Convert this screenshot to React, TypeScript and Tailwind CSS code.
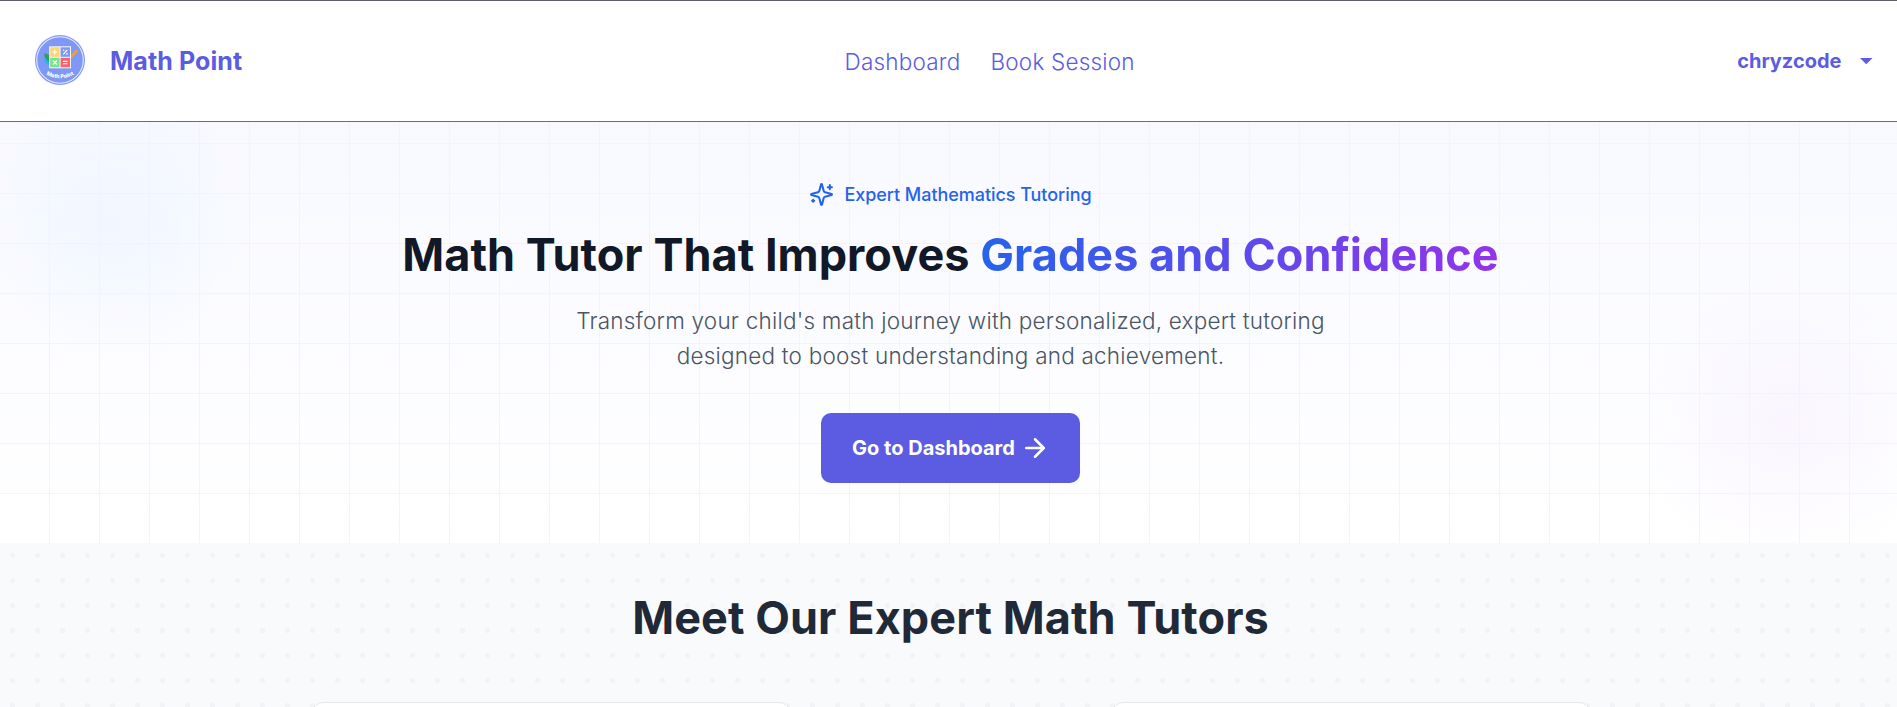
import { ArrowRight } from "lucide-react";

function Logo() {
  return (
    <svg viewBox="0 0 50 50" className="-mt-[2px] size-[50px]" role="img" aria-label="Math Point logo">
      <defs>
        <path id="arc" d="M9.5 38.8 Q25 47.5 40.5 38.800" />
      </defs>
      <circle cx="25" cy="25" r="25" fill="#7f97f5" />
      <circle cx="25" cy="25" r="23.3" fill="none" stroke="#e4ebff" strokeWidth="1.1" />
      <path d="M9.5 18l5 2v9l-5-7z" fill="#2f9d6b" />
      <path d="M8.500 24l6 2.500v3.500l-4-2z" fill="#22b8e6" />
      <path d="M35 21l6-6.500 2.500 1.500-8 8.500z" fill="#e9a23b" />
      <rect x="14.200" y="11.300" width="21.800" height="22" fill="#f7f7f2" />
      <rect x="15.200" y="12.300" width="9.400" height="9.500" fill="#fbd671" />
      <rect x="25.600" y="12.300" width="9.400" height="9.500" fill="#7f97f5" />
      <rect x="15.200" y="22.800" width="9.400" height="9.500" fill="#77e38f" />
      <rect x="25.600" y="22.800" width="9.400" height="9.500" fill="#f5636b" />
      <g stroke="#fff" strokeWidth="1.1">
        <path d="M17.300 17h5M19.800 14.500v5M28.300 19.300l4-4.500M17.900 25.500l4 4M21.900 25.500l-4 4M28 26.400h4.600M28 28.800h4.600" />
      </g>
      <circle cx="28.700" cy="15.300" r=".8" fill="#fff" />
      <circle cx="32" cy="18.900" r=".8" fill="#fff" />
      <text fill="#fff" fontSize="5.400" fontWeight="800" fontFamily="Inter, sans-serif" textAnchor="middle">
        <textPath href="#arc" startOffset="50%">Math Point</textPath>
      </text>
    </svg>
  );
}

function SparklesIcon() {
  return (
    <svg
      viewBox="0 0 24 24"
      className="-mt-px size-[25px]"
      fill="none"
      stroke="currentColor"
      strokeWidth="2"
      strokeLinecap="round"
      strokeLinejoin="round"
    >
      <path d="M9.937 15.5A2 2 0 0 0 8.5 14.063l-6.135-1.582a.5.5 0 0 1 0-.962L8.5 9.936A2 2 0 0 0 9.937 8.5l1.582-6.135a.5.5 0 0 1 .963 0L14.063 8.5A2 2 0 0 0 15.5 9.937l6.135 1.581a.5.5 0 0 1 0 .964L15.5 14.063a2 2 0 0 0-1.437 1.437l-1.582 6.135a.5.5 0 0 1-.963 0z" />
      <path d="M20 3v4M22 5h-4M4 17v2M5 18H3" />
    </svg>
  );
}

function Header() {
  return (
    <header className="flex h-[122px] items-center justify-between border-t border-b border-t-[#5f5f68] border-b-[#5b5ce2] bg-white pr-[24px] pl-[35px] text-[#5b5ce2]">
      <a className="flex items-center gap-[25px]">
        <Logo />
        <span className="text-[25px] leading-[35px] font-bold tracking-[0.08px]">Math Point</span>
      </a>
      <nav className="flex gap-[30px] text-[22.5px] leading-[35px] font-light tracking-[0.2px]">
        <a>Dashboard</a>
        <a>Book Session</a>
      </nav>
      <button className="flex items-center gap-[19px] text-[20px] font-bold">
        chryzcode
        <svg viewBox="0 0 12 6" className="h-[6.25px] w-[12.5px]" fill="currentColor">
          <path d="M0 0h12L6 6z" />
        </svg>
      </button>
    </header>
  );
}

function Hero() {
  return (
    <section className="relative h-[421px] overflow-hidden bg-linear-to-b from-[#f8f9ff] to-white">
      <div className="absolute inset-0 bg-[linear-gradient(to_right,transparent_49px,#f3f4f6_49px),linear-gradient(to_bottom,transparent_49px,#f3f4f6_49px)] bg-[size:50px_50px] bg-[position:0_-28px]" />
      <div className="absolute top-[-36px] left-[-24px] size-[276px] rounded-full bg-[radial-gradient(closest-side,#ecf4ff99,#ecf4ff66_40%,#ecf4ff00)]" />
      <div className="absolute right-[-40px] bottom-[-30px] size-[300px] rounded-full bg-[radial-gradient(closest-side,#f8f0ff99,#f8f0ff00)]" />
      <div className="relative flex flex-col items-center pt-[59px] pl-[4px] text-center">
        <div className="flex items-center gap-[10px] text-[18px] leading-[28px] font-medium tracking-[-0.05px] text-[#2563eb]">
          <SparklesIcon />
          Expert Mathematics Tutoring
        </div>
        <h1 className="mt-[16px] text-[45px] leading-[60px] font-bold tracking-[0.04px] text-[#111827]">
          Math Tutor That Improves{" "}
          <span className="bg-linear-to-r/srgb from-[#2563eb] to-[#9333ea] bg-clip-text text-transparent">
            Grades and Confidence
          </span>
        </h1>
        <p className="mt-[18px] w-[768px] text-[22.5px] leading-[35px] font-light tracking-[0.22px] text-[#4b5563]">
          Transform your child's math journey with personalized, expert tutoring designed to boost
          understanding and achievement.
        </p>
        <button className="mt-[40px] flex h-[70px] w-[259px] items-center justify-center gap-[5px] rounded-[10px] bg-[#5b5ce2] pl-px text-[20px] font-bold text-white">
          Go to Dashboard
          <ArrowRight className="size-[30px]" />
        </button>
      </div>
    </section>
  );
}

function Tutors() {
  return (
    <section className="h-[164px] overflow-hidden bg-[#f9fafc] bg-[radial-gradient(circle_at_center,#f1f3f6_2.500px,transparent_2.800px)] bg-[size:25px_25px] pt-[45px]">
      <h2 className="pl-[4px] text-center text-[45px] leading-[60px] font-bold tracking-[0.08px] text-[#1f2937]">
        Meet Our Expert Math Tutors
      </h2>
      <div className="mt-[54px] flex justify-center gap-[320px] pl-[5px]">
        <article className="h-[300px] w-[480px] rounded-[12px] border border-gray-200 bg-white" />
        <article className="h-[300px] w-[480px] rounded-[12px] border border-gray-200 bg-white" />
      </div>
    </section>
  );
}

export default function App() {
  return (
    <main className="h-[707px] overflow-hidden font-[Inter,sans-serif]">
      <Header />
      <Hero />
      <Tutors />
    </main>
  );
}
